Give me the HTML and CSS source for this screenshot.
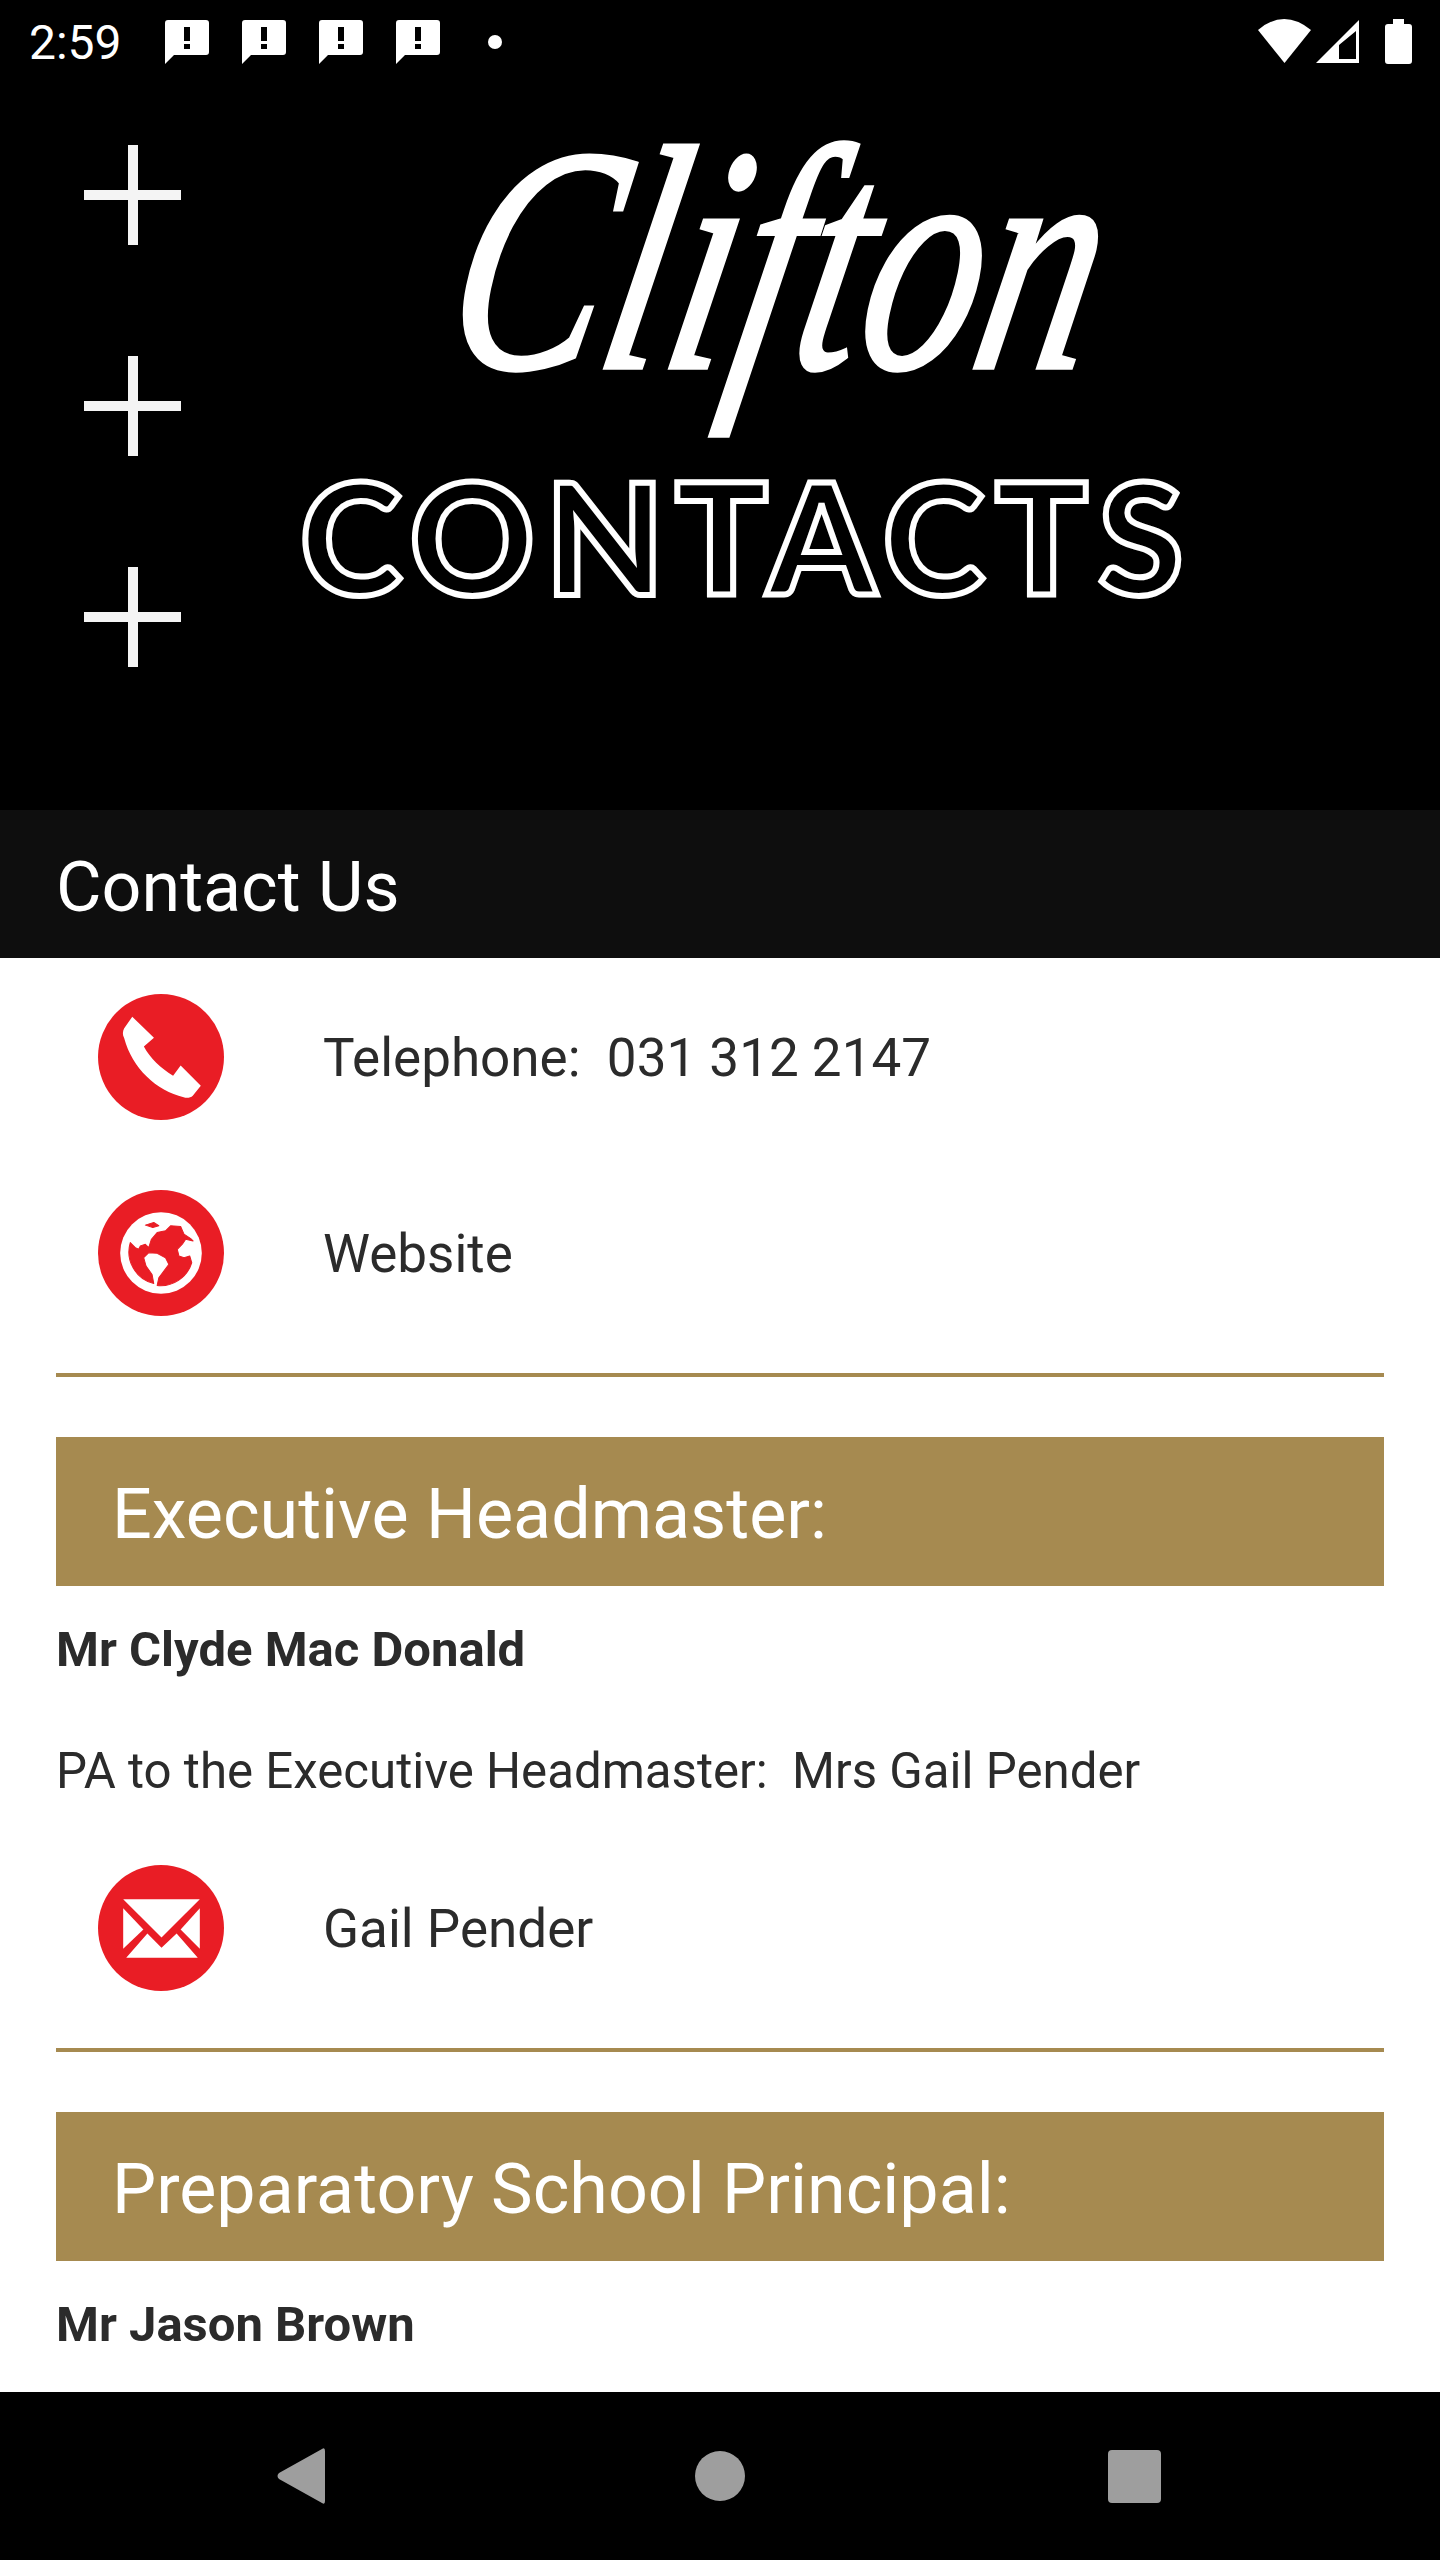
FILE: index.html
```html
<!DOCTYPE html>
<html lang="en">
<head>
  <meta charset="UTF-8" />
  <meta name="viewport" content="width=device-width, initial-scale=1.0"/>
  <title>Clifton Contacts</title>
  <link rel="stylesheet" href="styles.css">
</head>
<body>
  <div class="screen">
    <div class="status-bar">
      <span class="clock">2:59</span>
      <div class="alerts">
        <svg class="alert" viewBox="0 0 44 44"><path d="M3 0H41Q44 0 44 3V32Q44 35 41 35H9L0 44V3Q0 0 3 0ZM19 7V21H25V7ZM19 24V29H25V24Z" fill="#fff" fill-rule="evenodd"/></svg>
        <svg class="alert" viewBox="0 0 44 44"><path d="M3 0H41Q44 0 44 3V32Q44 35 41 35H9L0 44V3Q0 0 3 0ZM19 7V21H25V7ZM19 24V29H25V24Z" fill="#fff" fill-rule="evenodd"/></svg>
        <svg class="alert" viewBox="0 0 44 44"><path d="M3 0H41Q44 0 44 3V32Q44 35 41 35H9L0 44V3Q0 0 3 0ZM19 7V21H25V7ZM19 24V29H25V24Z" fill="#fff" fill-rule="evenodd"/></svg>
        <svg class="alert" viewBox="0 0 44 44"><path d="M3 0H41Q44 0 44 3V32Q44 35 41 35H9L0 44V3Q0 0 3 0ZM19 7V21H25V7ZM19 24V29H25V24Z" fill="#fff" fill-rule="evenodd"/></svg>
        <span class="more-dot"></span>
      </div>
      <svg class="system-icons" viewBox="0 0 156 46">
        <!-- wifi -->
        <path d="M2 12Q28 -10 55 12L28.5 45Z" fill="#fff"/>
        <!-- signal -->
        <path d="M60 45L103 2V45ZM83 41H100V13L83 27Z" fill="#fff" fill-rule="evenodd"/>
        <!-- battery -->
        <path d="M137 1H148V6H153Q156 6 156 9V43Q156 46 153 46H132Q129 46 129 43V9Q129 6 132 6H137Z" fill="#fff"/>
      </svg>
    </div>

    <header class="hero">
      <div class="plus-column">
        <span class="plus"></span>
        <span class="plus"></span>
        <span class="plus"></span>
      </div>
      <div class="logo">
        <span class="logo-script">Clifton</span>
        <span class="logo-outline">CONTACTS</span>
      </div>
    </header>

    <h1 class="page-title">Contact Us</h1>

    <main class="content">
      <div class="contact-row">
        <svg class="round-icon" viewBox="0 0 125 125">
          <circle cx="62.5" cy="62.5" r="62.5" fill="#e91d25"/>
          <path d="M34 22.5L55.5 43.5L45.5 52C52 64 62 73 74.5 81L82 71L102 91L94 101C92 103 88 103.5 85 102.5C58 96 34 74 26 44C24 40 24.5 37 26 34Z" fill="#fff"/>
        </svg>
        <span class="contact-text">Telephone:  031 312 2147</span>
      </div>
      <div class="contact-row">
        <svg class="round-icon" viewBox="0 0 125 125">
          <circle cx="62.5" cy="62.5" r="62.5" fill="#e91d25"/>
          <circle cx="62.5" cy="62.5" r="40.5" fill="#fff"/>
          <g transform="translate(17 15.5) scale(.3333)" fill="#e91d25" stroke="#e91d25" stroke-width="3" stroke-linejoin="round">
            <path d="M100 125L108 100L125 80L150 75L165 60L195 62L205 85L225 98L232 105L210 100L200 115L185 130L190 150L205 155L222 150L228 170A97 97 0 0 1 125 238L130 215L145 195L160 175L150 155L125 142L100 140L85 155L92 180L110 205L115 232A97 97 0 0 1 45 110L60 125L70 130L75 120L90 115Z"/>
            <path d="M90 58L115 50L130 60L112 65Z"/>
          </g>
        </svg>
        <span class="contact-text">Website</span>
      </div>
      <hr class="divider">

      <h2 class="banner">Executive Headmaster:</h2>
      <p class="person">Mr Clyde Mac Donald</p>
      <p class="assistant">PA to the Executive Headmaster:  Mrs Gail Pender</p>
      <div class="contact-row">
        <svg class="round-icon" viewBox="0 0 125 125">
          <circle cx="62.5" cy="62.5" r="62.5" fill="#e91d25"/>
          <path d="M25 34H101L63 72Z" fill="#fff"/>
          <path d="M25 43L45 64L25 83Z" fill="#fff"/>
          <path d="M101 43L82 64L101 83Z" fill="#fff"/>
          <path d="M28 92L49 68L63 82L78 68L99 92Z" fill="#fff"/>
        </svg>
        <span class="contact-text">Gail Pender</span>
      </div>
      <hr class="divider">

      <h2 class="banner">Preparatory School Principal:</h2>
      <p class="person">Mr Jason Brown</p>
    </main>

    <nav class="nav-bar">
      <svg class="nav-back" viewBox="0 0 48 56"><path d="M45 1Q48 -1 48 3V53Q48 57 45 55L2 31Q-1 28 2 25Z" fill="#9e9e9e"/></svg>
      <span class="nav-home"></span>
      <span class="nav-recent"></span>
    </nav>
  </div>
</body>
</html>
```

FILE: styles.css
```css
* {
  box-sizing: border-box;
}

body {
  margin: 0;
  background: #000;
  font-family: Roboto, sans-serif;
}

.screen {
  width: 1440px;
  height: 2560px;
  display: flex;
  flex-direction: column;
  overflow: hidden;
}

/* status bar */
.status-bar {
  height: 80px;
  flex: none;
  background: #000;
  color: #fff;
  display: flex;
  padding: 18px 28px 0 29px;
}

.clock {
  font-size: 48px;
  line-height: 50px;
  width: 136px;
}

.alerts {
  display: flex;
  gap: 33px;
  padding-top: 2px;
  height: 46px;
}

.alert {
  width: 44px;
  height: 44px;
}

.more-dot {
  width: 14px;
  height: 14px;
  border-radius: 50%;
  background: #fff;
  margin: 15px 0 0 15px;
}

.system-icons {
  width: 156px;
  height: 46px;
  margin-left: auto;
}

/* logo header */
.hero {
  height: 730px;
  flex: none;
  background: #000;
  display: flex;
  padding: 65px 0 0 84px;
}

.plus-column {
  display: flex;
  flex-direction: column;
  gap: 111px;
}

.plus {
  display: block;
  width: 97px;
  height: 100px;
  background:
    linear-gradient(#f4f4f4, #f4f4f4) center / 10px 100% no-repeat,
    linear-gradient(#f4f4f4, #f4f4f4) center / 100% 10px no-repeat;
}

.logo {
  margin-left: 120px;
  width: 882px;
  display: flex;
  flex-direction: column;
  align-items: center;
}

.logo-script {
  font-family: "Liberation Serif", serif;
  font-style: italic;
  font-weight: 400;
  font-size: 232px;
  line-height: 290px;
  color: #fff;
  -webkit-text-stroke: 3px #fff;
  transform: translate(40px, -30px) scaleY(1.38) skewX(-16deg);
}

.logo-outline {
  font-family: Lato, sans-serif;
  font-weight: 900;
  font-size: 154px;
  line-height: 124px;
  letter-spacing: 10.6px;
  color: #000;
  -webkit-text-stroke: 6px #fff;
  margin: 39px 0 0 10px;
}

.page-title {
  height: 148px;
  flex: none;
  margin: 0;
  padding: 0 0 0 56px;
  background: #0e0e0e;
  color: #fff;
  font-size: 70px;
  font-weight: 400;
  line-height: 155px;
}

/* contacts list */
.content {
  height: 1434px;
  flex: none;
  background: #fff;
  padding: 0 56px;
  overflow: hidden;
  color: #2b2b2b;
}

.contact-row {
  height: 196px;
  display: flex;
  align-items: center;
  padding-left: 42px;
  gap: 99px;
}

.round-icon {
  width: 126px;
  height: 126px;
  flex: none;
  margin-top: 2px;
}

.contact-text {
  font-size: 53px;
  white-space: pre;
  padding-top: 3px;
}

.divider {
  height: 4px;
  margin: 23px 0 60px;
  border: none;
  background: #a68a50;
}

.banner {
  height: 149px;
  margin: 0;
  padding-left: 56px;
  background: #a68a50;
  color: #fff;
  font-size: 70px;
  font-weight: 400;
  line-height: 155px;
}

.person {
  margin: 34px 0 0;
  font-size: 49px;
  font-weight: 700;
  line-height: 60px;
}

.assistant {
  margin: 61px 0 28px;
  font-size: 49.2px;
  line-height: 60px;
  white-space: pre;
}

/* android nav */
.nav-bar {
  height: 168px;
  flex: none;
  background: #000;
  display: flex;
  align-items: center;
  padding-left: 277px;
}

.nav-back {
  width: 48px;
  height: 56px;
}

.nav-home {
  width: 50px;
  height: 50px;
  margin: 0 363px 0 370px;
  border-radius: 50%;
  background: #9e9e9e;
}

.nav-recent {
  width: 53px;
  height: 53px;
  border-radius: 4px;
  background: #9e9e9e;
}
```
